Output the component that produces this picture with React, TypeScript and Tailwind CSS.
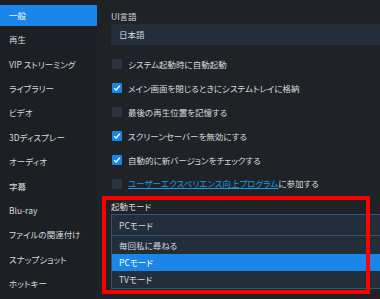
import React from 'react'

const menu = [
  '一般',
  '再生',
  'VIP ストリーミング',
  'ライブラリー',
  'ビデオ',
  '3Dディスプレー',
  'オーディオ',
  '字幕',
  'Blu-ray',
  'ファイルの関連付け',
  'スナップショット',
  'ホットキー',
]

const options = [
  { label: 'システム起動時に自動起動', checked: false },
  { label: 'メイン画面を閉じるときにシステムトレイに格納', checked: true },
  { label: '最後の再生位置を記憶する', checked: false },
  { label: 'スクリーンセーバーを無効にする', checked: true },
  { label: '自動的に新バージョンをチェックする', checked: true },
]

function Check({ on }: { on: boolean }) {
  return (
    <div
      className={
        'w-[10px] h-[10px] shrink-0 flex items-center justify-center rounded-[1px] ' +
        (on ? 'bg-[#1a86ea]' : 'bg-[#2a3440]')
      }
    >
      {on && (
        <svg width="8" height="8" viewBox="0 0 8 8">
          <path d="M1.2 4.2 L3.2 6 L6.8 1.8" stroke="#fff" strokeWidth="1.4" fill="none" />
        </svg>
      )}
    </div>
  )
}

export default function App() {
  return (
    <div
      className="relative w-[380px] h-[299px] overflow-hidden flex bg-[#1f2327] text-[#d6dade] text-[8.5px] [font-feature-settings:'palt']"
      style={{ fontFamily: '"Noto Sans CJK JP", "Noto Sans", sans-serif' }}
    >
      {/* sidebar */}
      <div className="w-[97px] shrink-0 bg-[#1c2024] pt-[3px]">
        {menu.map((m, i) => (
          <div key={m} className="h-[24.4px] flex items-center">
            <div
              className={
                'h-[21px] w-full flex items-center pl-[9px] ' +
                (i === 0 ? 'bg-[#1a86ea] text-white' : '')
              }
            >
              {m}
            </div>
          </div>
        ))}
      </div>

      {/* main */}
      <div className="flex-1 pl-[14px] pt-[10px] flex flex-col">
        <div className="h-[13px] flex items-center">UI言語</div>
        <div className="mt-[1px] h-[21px] bg-[#222e3a] flex items-center pl-[8px]">日本語</div>

        <div className="mt-[7px] flex flex-col">
          {options.map((o) => (
            <div key={o.label} className="h-[24px] flex items-center gap-[6px] pl-[1px]">
              <Check on={o.checked} />
              <span>{o.label}</span>
            </div>
          ))}
          <div className="h-[23px] flex items-center gap-[6px] pl-[1px]">
            <Check on={false} />
            <span>
              <span className="text-[#1e9be6] underline">ユーザーエクスペリエンス向上プログラム</span>
              に参加する
            </span>
          </div>
        </div>

        <div className="mt-[4px] h-[14px] flex items-center">起動モード</div>
        <div className="mt-[1px] border border-[#2c5880] border-r-0">
          <div className="h-[21px] bg-[#222e3a] flex items-center pl-[7px] border-b border-[#2c5880]">
            PCモード
          </div>
          <div className="h-[18px] bg-[#222e3a] flex items-center pl-[7px]">毎回私に尋ねる</div>
          <div className="h-[17px] bg-[#1a86ea] text-white flex items-center pl-[7px]">PCモード</div>
          <div className="h-[17px] bg-[#222e3a] flex items-center pl-[7px]">TVモード</div>
        </div>
      </div>

      {/* annotation */}
      <div className="absolute left-[102px] top-[196px] w-[268px] h-[98px] border-[4px] border-[#ff0000]" />
    </div>
  )
}
